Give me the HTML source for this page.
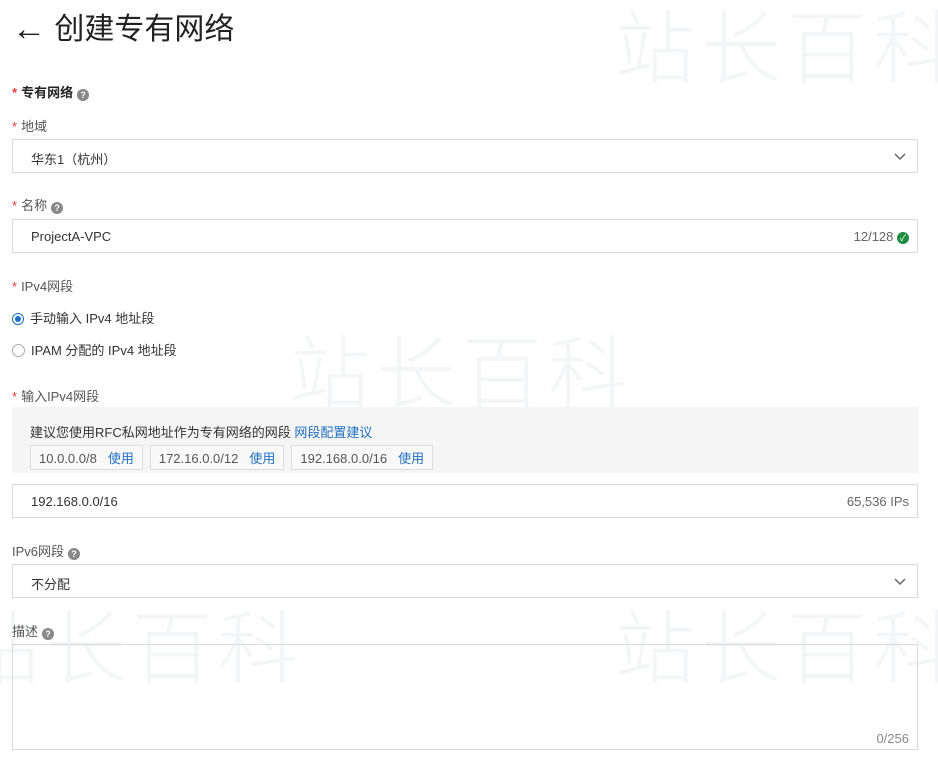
<!DOCTYPE html><html><head><meta charset="utf-8"><style>
body{margin:0;width:938px;height:758px;background:#fff;font-family:"Liberation Sans","Noto Sans CJK SC",sans-serif;font-size:13px;color:#333;position:relative;overflow:hidden}
.a{position:absolute;white-space:nowrap}
.lbl{color:#555;font-size:13px}
.st{color:#e4393c;margin-right:4px}
.box{position:absolute;left:12px;width:906px;border:1px solid #d9d9d9;background:transparent;box-sizing:border-box}
.q{display:inline-block;width:12px;height:12px;border-radius:50%;background:#888;color:#fff;font-size:9px;line-height:12px;text-align:center;vertical-align:-1px;margin-left:4px;font-weight:bold}
.chev{position:absolute;right:10px;top:9px}
.tag{display:inline-block;border:1px solid #ddd;background:#f9f9f9;padding:2px 8px;margin-right:7px;color:#555}
.tag b{font-weight:normal;color:#1f6fc4;margin-left:11px}
.wm{position:absolute;color:#f3f5f7;font-size:80px;letter-spacing:6px;font-weight:200;white-space:nowrap}
</style></head><body>
<div class="wm" style="left:615px;top:-15px">站长百科</div>
<div class="wm" style="left:290px;top:310px">站长百科</div>
<div class="wm" style="left:615px;top:585px">站长百科</div>
<div class="wm" style="left:-40px;top:585px">站长百科</div>
<div class="a" style="left:12px;top:4px;font-size:30px;color:#222"><span style="font-size:34px;position:relative;top:1px">←</span>&nbsp;创建专有网络</div>
<div class="a" style="left:12px;top:82px;font-size:13px;font-weight:bold;color:#222"><span class="st">*</span>专有网络<span class="q">?</span></div>
<div class="a lbl" style="left:12px;top:116px"><span class="st">*</span>地域</div>
<div class="box" style="top:139px;height:34px"><span class="a" style="left:18px;top:9px">华东1（杭州）</span><svg class="chev" width="14" height="14"><path d="M2 5l5 5 5-5" fill="none" stroke="#666" stroke-width="1.5"/></svg></div>
<div class="a lbl" style="left:12px;top:195px"><span class="st">*</span>名称<span class="q">?</span></div>
<div class="box" style="top:219px;height:34px"><span class="a" style="left:18px;top:9px">ProjectA-VPC</span><span class="a" style="right:8px;top:9px;color:#666">12/128 <span style="display:inline-block;width:12px;height:12px;border-radius:50%;background:#1e8e3e;color:#fff;font-size:9px;line-height:12px;text-align:center">✓</span></span></div>
<div class="a lbl" style="left:12px;top:276px"><span class="st">*</span>IPv4网段</div>
<div class="a" style="left:12px;top:308px"><span style="display:inline-block;width:12px;height:12px;border:1px solid #1f6fc4;border-radius:50%;vertical-align:-2px;position:relative;margin-right:6px;box-sizing:border-box"><span style="position:absolute;left:2px;top:2px;width:6px;height:6px;border-radius:50%;background:#1f6fc4"></span></span>手动输入 IPv4 地址段</div>
<div class="a" style="left:12px;top:340px"><span style="display:inline-block;width:13px;height:13px;border:1px solid #aaa;border-radius:50%;vertical-align:-2px;margin-right:6px;box-sizing:border-box"></span>IPAM 分配的 IPv4 地址段</div>
<div class="a lbl" style="left:12px;top:386px"><span class="st">*</span>输入IPv4网段</div>
<div class="a" style="left:12px;top:407px;width:906px;height:66px;background:#f5f5f5"></div>
<div class="a" style="left:30px;top:422px">建议您使用RFC私网地址作为专有网络的网段 <span style="color:#1f6fc4">网段配置建议</span></div>
<div class="a" style="left:30px;top:445px"><span class="tag">10.0.0.0/8<b>使用</b></span><span class="tag">172.16.0.0/12<b>使用</b></span><span class="tag">192.168.0.0/16<b>使用</b></span></div>
<div class="box" style="top:484px;height:34px"><span class="a" style="left:18px;top:9px">192.168.0.0/16</span><span class="a" style="right:8px;top:9px;color:#666">65,536 IPs</span></div>
<div class="a lbl" style="left:12px;top:541px">IPv6网段<span class="q">?</span></div>
<div class="box" style="top:564px;height:34px"><span class="a" style="left:18px;top:9px">不分配</span><svg class="chev" width="14" height="14"><path d="M2 5l5 5 5-5" fill="none" stroke="#666" stroke-width="1.5"/></svg></div>
<div class="a lbl" style="left:12px;top:621px">描述<span class="q">?</span></div>
<div class="box" style="top:644px;height:106px"><span class="a" style="right:8px;bottom:3px;color:#888">0/256</span></div>
</body></html>
